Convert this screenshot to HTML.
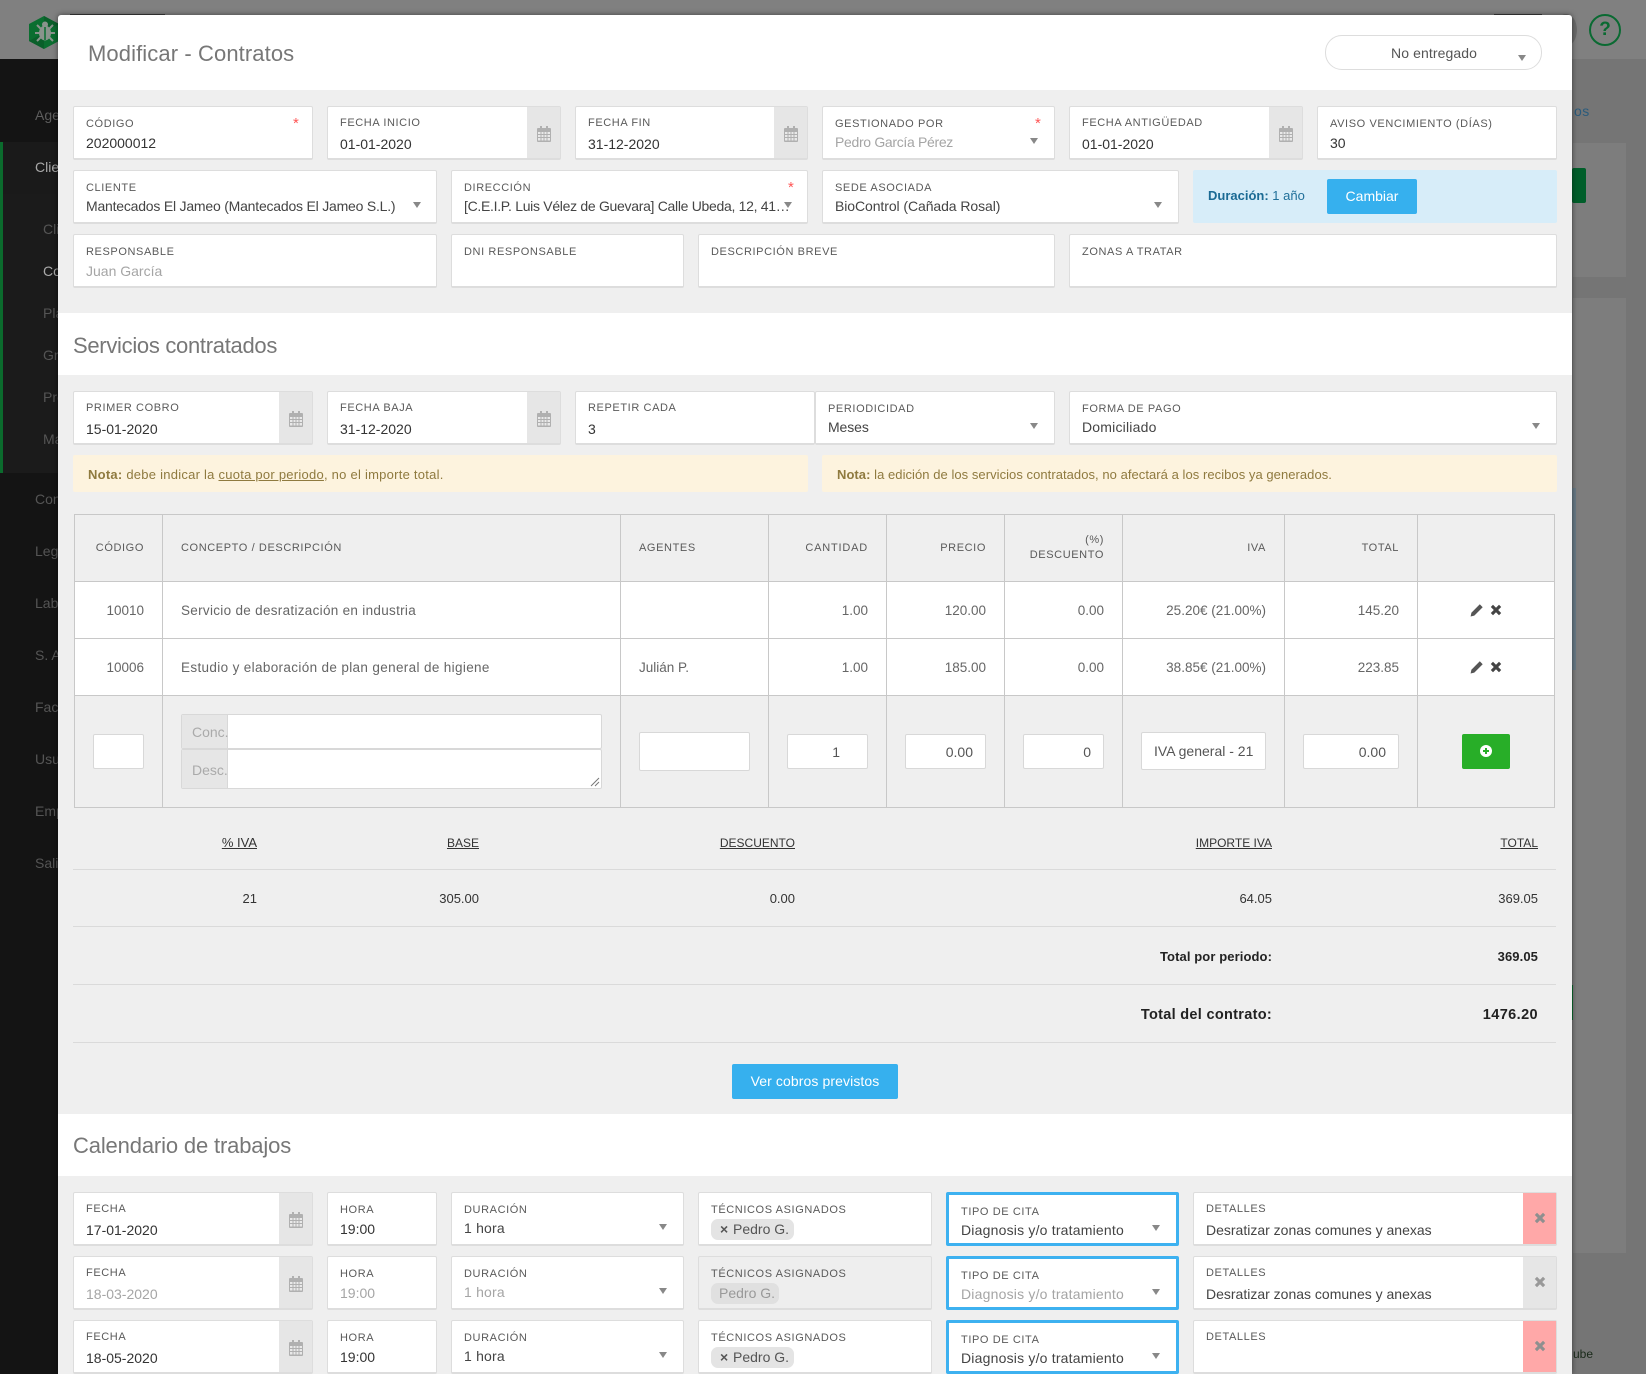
<!DOCTYPE html>
<html lang="es"><head><meta charset="utf-8"><title>Modificar - Contratos</title>
<style>
html,body{margin:0;padding:0}
body{width:1646px;height:1374px;overflow:hidden;position:relative;background:#757575;font-family:"Liberation Sans",sans-serif;color:#555}
.p{position:absolute}
.t{position:absolute;white-space:nowrap;line-height:20px}
.s{position:absolute;white-space:nowrap;line-height:20px;color:#6d6d6d;font-size:14px;left:35px}
.s2{left:43px}
.g{position:absolute;background:#efefef;left:58px;width:1514px}
.f{position:absolute;box-sizing:border-box;background:#fff;border:1px solid #ddd;border-bottom:2px solid #ddd;border-radius:2px}
.l{position:absolute;left:12px;top:9px;line-height:16px;font-size:11px;letter-spacing:.6px;color:#5a5a5a;white-space:nowrap}
.l2{top:8px}
.v,.vs,.vi{position:absolute;left:12px;line-height:20px;font-size:14px;color:#333;white-space:nowrap}
.v{top:27px}.vs{top:25px;letter-spacing:.2px;color:#444}.vi{top:26px}
.gr{color:#a5a5a5!important}
.ad{position:absolute;right:0;top:0;bottom:0;width:33px;background:#e6e6e6}
.ad svg{position:absolute;left:10px;top:19px}
.a{position:absolute;width:0;height:0;border-left:4px solid transparent;border-right:4px solid transparent;border-top:6px solid #888}
.st{position:absolute;font-size:15px;color:#f55;line-height:16px}
.h{position:absolute;left:73px;font-size:22px;line-height:30px;color:#777;white-space:nowrap}
.n{position:absolute;top:455px;height:37px;background:#fdf3de;border-radius:2px;line-height:39px;font-size:13px;color:#8f7a3f;white-space:nowrap;box-sizing:border-box}
table.m{position:absolute;left:74px;top:514px;width:1480px;border-collapse:collapse;table-layout:fixed;font-size:13.5px;color:#666}
table.m td,table.m th{border:1px solid #c8c8c8;padding:0 18px;font-weight:400;white-space:nowrap}
table.m th{background:#efefef;height:66px;font-size:11px;letter-spacing:.6px;color:#5a5a5a;line-height:15px}
table.m tr.r td{background:#fff;height:56px}
table.m tr.e td{background:#efefef;height:111px}
.tl{text-align:left}.tr{text-align:right}
table.m td.w{letter-spacing:.3px}
.i{position:absolute;box-sizing:border-box;background:#fff;border:1px solid #d8d8d8;border-radius:2px;font-size:14px;color:#555;line-height:34px;text-align:right;white-space:nowrap}
.ic{position:absolute}
.sh{position:absolute;white-space:nowrap;font-size:13px;line-height:20px;text-align:right;color:#333}
.sh u.c{font-size:12px}
.ln{position:absolute;left:73px;width:1483px;height:1px;background:#dadada}
.btn{position:absolute;background:#36b0ee;border-radius:2px;color:#fff;font-size:14px;text-align:center;font-weight:400}
.chip{position:absolute;left:12px;top:26px;height:21px;border-radius:7px;background:#e4e4e4;line-height:21px;font-size:14px;color:#555;white-space:nowrap}
.b{position:absolute;box-sizing:border-box;background:#fff;border:3px solid #3db1f0;border-radius:2px;left:946px;width:233px;height:54px}
.b .l{left:12px;top:9px}
.b .vs{left:12px;top:25px}
.b .a{left:203px;top:30px}
.x{position:absolute;right:0;top:0;bottom:0;width:33px;background:#e6e6e6}
.x.pk{background:#ffa8a8}
.x svg{position:absolute;left:11px;top:19px}
</style></head><body>
<svg width="0" height="0" style="position:absolute"><defs>
<symbol id="cal" viewBox="0 0 14 16"><path fill="#b0b0b0" d="M3 0h2v2h4V0h2v2h2a1 1 0 0 1 1 1v12a1 1 0 0 1-1 1H1a1 1 0 0 1-1-1V3a1 1 0 0 1 1-1h2z"/><path fill="#e9e9e9" d="M1 6h2.500v2H1zM4.500 6H6.500v2h-2zM7.500 6h2v2h-2zM10.500 6H13v2h-2.500zM1 9h2.500v2H1zM4.500 9h2v2h-2zM7.500 9h2v2h-2zM10.500 9H13v2h-2.500zM1 12h2.500v2.500H1zM4.500 12h2v2.500h-2zM7.500 12h2v2.500h-2zM10.500 12H13v2.500h-2.500z"/></symbol>
<symbol id="xx" viewBox="0 0 12 12"><path d="M3 .8 6 3.800 9 .8 11.200 3 8.200 6 11.200 9 9 11.200 6 8.200 3 11.200 .8 9 3.800 6 .8 3z"/></symbol>
<symbol id="pen" viewBox="0 0 13 13"><path fill="#555" d="M9.800.3 12.700 3.200 4.300 11.600 .6 12.500 1.400 8.700z"/></symbol>
</defs></svg>

<!-- backdrop -->
<div class="p" style="left:0;top:0;width:1646px;height:59px;background:#808080"></div>
<div class="p" style="left:70px;top:14px;width:95px;height:1px;background:#3a3a3a"></div>
<div class="p" style="left:1494px;top:14px;width:48px;height:1px;background:#3a3a3a"></div>
<div class="p" style="left:0;top:59px;width:58px;height:1315px;background:#141414"></div>
<div class="p" style="left:0;top:142px;width:58px;height:52px;background:#1a1a1a"></div>
<div class="p" style="left:0;top:194px;width:58px;height:279px;background:#1b1b1b"></div>
<div class="p" style="left:0;top:142px;width:3px;height:331px;background:#0b6b2d"></div>
<svg class="p" style="left:28px;top:15px" width="32" height="35" viewBox="0 0 32 35"><polygon points="16,1 31,9 31,26 16,34 1,26 1,9" fill="#0b6e30"/><polygon points="16,1 31,9 16,17.500" fill="#0a5f2a"/><polygon points="1,26 16,17.500 16,34" fill="#0a5f2a"/><ellipse cx="17" cy="18" rx="6" ry="7.500" fill="#8a948c"/><circle cx="17" cy="9.500" r="3" fill="#8a948c"/><path d="M9 10l4 4M25 10l-4 4M7 18h5M27 18h-5M9 26l4-4M25 26l-4-4" stroke="#8a948c" stroke-width="2" fill="none"/><path d="M17 12v13" stroke="#0b6e30" stroke-width="1.500"/></svg>
<div class="s" style="top:105px;color:#5e5e5e">Agenda</div>
<div class="s" style="top:157px;color:#a8a8a8">Clientes</div>
<div class="s s2" style="top:219px;color:#555">Clientes</div>
<div class="s s2" style="top:261px;color:#aaa">Contratos</div>
<div class="s s2" style="top:303px;color:#555">Planes</div>
<div class="s s2" style="top:345px;color:#555">Grupos</div>
<div class="s s2" style="top:387px;color:#555">Precios</div>
<div class="s s2" style="top:429px;color:#555">Mapa</div>
<div class="s" style="top:489px;color:#555">Contratos</div>
<div class="s" style="top:541px;color:#555">Legal</div>
<div class="s" style="top:593px;color:#555">Lab</div>
<div class="s" style="top:645px;color:#555">S. A</div>
<div class="s" style="top:697px;color:#555">Facturas</div>
<div class="s" style="top:749px;color:#555">Usuarios</div>
<div class="s" style="top:801px;color:#555">Empresa</div>
<div class="s" style="top:853px;color:#555">Salir</div>

<div class="p" style="left:1573px;top:143px;width:53px;height:134px;background:#7d7d7d"></div>
<div class="p" style="left:1573px;top:298px;width:53px;height:955px;background:#7d7d7d"></div>
<div class="p" style="left:1572px;top:168px;width:14px;height:35px;background:#005e2a;border-radius:2px"></div>
<div class="p" style="left:1572px;top:488px;width:4px;height:182px;background:#687a86"></div>
<div class="p" style="left:1572px;top:985px;width:1px;height:35px;background:#0b6b2d"></div>
<div class="t" style="left:1574px;top:101px;font-size:14px;letter-spacing:.5px;color:#2a5b7c">os</div>
<div class="t" style="left:1573px;top:1344px;font-size:12px;color:#1a2a1a">ube</div>
<div class="p" style="left:1555px;top:14px;width:22px;height:32px;background:#6a6a6a;border-radius:50%"></div>
<div class="p" style="left:1589px;top:14px;width:32px;height:32px;box-sizing:border-box;border:2.500px solid #0a6a32;border-radius:50%;text-align:center;font-size:19px;font-weight:700;line-height:27px;color:#0a6a32">?</div>

<!-- modal -->
<div class="p" style="left:58px;top:15px;width:1514px;height:1359px;background:#fff;border-radius:3px 3px 0 0;box-shadow:0 0 6px rgba(0,0,0,.5)"></div>
<div class="g" style="top:90px;height:223px"></div>
<div class="g" style="top:375px;height:739px"></div>
<div class="g" style="top:1176px;height:198px"></div>

<div class="t" style="left:88px;top:39px;font-size:22px;line-height:30px;color:#777;letter-spacing:.1px">Modificar - Contratos</div>
<div class="p" style="left:1325px;top:35px;width:217px;height:35px;box-sizing:border-box;border:1px solid #ddd;border-radius:17px;background:#fff"></div>
<div class="t" style="left:1391px;top:43px;font-size:14px;color:#555;letter-spacing:.1px">No entregado</div>
<div class="a" style="left:1518px;top:55px"></div>

<!-- row 1 -->
<div class="f" style="left:73px;top:106px;width:240px;height:54px"><div class="l">CÓDIGO</div><div class="vi">202000012</div><div class="st" style="left:219px;top:9px">*</div></div>
<div class="f" style="left:327px;top:106px;width:234px;height:54px"><div class="l l2">FECHA INICIO</div><div class="v">01-01-2020</div><div class="ad"><svg width="14" height="16"><use href="#cal"/></svg></div></div>
<div class="f" style="left:575px;top:106px;width:233px;height:54px"><div class="l l2">FECHA FIN</div><div class="v">31-12-2020</div><div class="ad"><svg width="14" height="16"><use href="#cal"/></svg></div></div>
<div class="f" style="left:822px;top:106px;width:233px;height:54px"><div class="l">GESTIONADO POR</div><div class="vs gr" style="letter-spacing:-.32px">Pedro García Pérez</div><div class="st" style="left:212px;top:9px">*</div><div class="a" style="left:207px;top:31px"></div></div>
<div class="f" style="left:1069px;top:106px;width:234px;height:54px"><div class="l l2">FECHA ANTIGÜEDAD</div><div class="v">01-01-2020</div><div class="ad"><svg width="14" height="16"><use href="#cal"/></svg></div></div>
<div class="f" style="left:1317px;top:106px;width:240px;height:54px"><div class="l">AVISO VENCIMIENTO (DÍAS)</div><div class="vi">30</div></div>

<!-- row 2 -->
<div class="f" style="left:73px;top:170px;width:364px;height:54px"><div class="l">CLIENTE</div><div class="vs" style="letter-spacing:-.21px">Mantecados El Jameo (Mantecados El Jameo S.L.)</div><div class="a" style="left:339px;top:31px"></div></div>
<div class="f" style="left:451px;top:170px;width:357px;height:54px"><div class="l">DIRECCIÓN</div><div class="vs" style="width:333px;overflow:hidden;text-overflow:ellipsis;letter-spacing:-.3px">[C.E.I.P. Luis Vélez de Guevara] Calle Ubeda, 12, 41500 Alcalá</div><div class="st" style="left:336px;top:9px">*</div><div class="a" style="left:332px;top:31px"></div></div>
<div class="f" style="left:822px;top:170px;width:357px;height:54px"><div class="l">SEDE ASOCIADA</div><div class="vs" style="letter-spacing:-.08px">BioControl (Cañada Rosal)</div><div class="a" style="left:331px;top:31px"></div></div>
<div class="p" style="left:1193px;top:170px;width:364px;height:53px;background:#d7edf9;border-radius:2px"></div>
<div class="t" style="left:1208px;top:186px;font-size:13px;color:#555"><b style="color:#1a6a94">Duración:</b> <span style="color:#1f6f99">1 año</span></div>
<div class="btn" style="left:1327px;top:179px;width:90px;height:35px;line-height:35px">Cambiar</div>

<!-- row 3 -->
<div class="f" style="left:73px;top:234px;width:364px;height:54px"><div class="l">RESPONSABLE</div><div class="vi gr">Juan García</div></div>
<div class="f" style="left:451px;top:234px;width:233px;height:54px"><div class="l">DNI RESPONSABLE</div></div>
<div class="f" style="left:698px;top:234px;width:357px;height:54px"><div class="l">DESCRIPCIÓN BREVE</div></div>
<div class="f" style="left:1069px;top:234px;width:488px;height:54px"><div class="l">ZONAS A TRATAR</div></div>

<div class="h" style="top:331px;letter-spacing:-.3px">Servicios contratados</div>

<!-- services -->
<div class="f" style="left:73px;top:391px;width:240px;height:54px"><div class="l l2">PRIMER COBRO</div><div class="v">15-01-2020</div><div class="ad"><svg width="14" height="16"><use href="#cal"/></svg></div></div>
<div class="f" style="left:327px;top:391px;width:234px;height:54px"><div class="l l2">FECHA BAJA</div><div class="v">31-12-2020</div><div class="ad"><svg width="14" height="16"><use href="#cal"/></svg></div></div>
<div class="f" style="left:575px;top:391px;width:240px;height:54px"><div class="l l2">REPETIR CADA</div><div class="v">3</div></div>
<div class="f" style="left:815px;top:391px;width:240px;height:54px"><div class="l">PERIODICIDAD</div><div class="vs" style="letter-spacing:-.1px">Meses</div><div class="a" style="left:214px;top:31px"></div></div>
<div class="f" style="left:1069px;top:391px;width:488px;height:54px"><div class="l">FORMA DE PAGO</div><div class="vs">Domiciliado</div><div class="a" style="left:462px;top:31px"></div></div>

<div class="n" style="left:73px;width:735px;padding-left:15px;letter-spacing:.25px"><b>Nota:</b> debe indicar la <u>cuota por periodo</u>, no el importe total.</div>
<div class="n" style="left:822px;width:735px;padding-left:15px;letter-spacing:.05px"><b>Nota:</b> la edición de los servicios contratados, no afectará a los recibos ya generados.</div>

<!-- table -->
<table class="m">
<colgroup><col style="width:88px"><col style="width:458px"><col style="width:148px"><col style="width:118px"><col style="width:118px"><col style="width:118px"><col style="width:162px"><col style="width:133px"><col style="width:137px"></colgroup>
<tr><th class="tr">CÓDIGO</th><th class="tl">CONCEPTO / DESCRIPCIÓN</th><th class="tl">AGENTES</th><th class="tr" style="letter-spacing:.8px">CANTIDAD</th><th class="tr">PRECIO</th><th class="tr">(%)<br>DESCUENTO</th><th class="tr">IVA</th><th class="tr">TOTAL</th><th></th></tr>
<tr class="r"><td class="tr">10010</td><td class="w">Servicio de desratización en industria</td><td></td><td class="tr">1.00</td><td class="tr">120.00</td><td class="tr">0.00</td><td class="tr">25.20€ (21.00%)</td><td class="tr">145.20</td><td></td></tr>
<tr class="r"><td class="tr">10006</td><td class="w" style="letter-spacing:.35px">Estudio y elaboración de plan general de higiene</td><td>Julián P.</td><td class="tr">1.00</td><td class="tr">185.00</td><td class="tr">0.00</td><td class="tr">38.85€ (21.00%)</td><td class="tr">223.85</td><td></td></tr>
<tr class="e"><td></td><td></td><td></td><td></td><td></td><td></td><td></td><td></td><td></td></tr>
</table>

<svg class="ic" style="left:1470px;top:604px" width="13" height="13"><use href="#pen"/></svg>
<svg class="ic" style="left:1490px;top:604px;fill:#444" width="12" height="12"><use href="#xx"/></svg>
<svg class="ic" style="left:1470px;top:661px" width="13" height="13"><use href="#pen"/></svg>
<svg class="ic" style="left:1490px;top:661px;fill:#444" width="12" height="12"><use href="#xx"/></svg>

<div class="i" style="left:93px;top:734px;width:51px;height:35px"></div>
<div class="i" style="left:181px;top:714px;width:421px;height:35px;overflow:hidden"><div class="p" style="left:0;top:0;bottom:0;width:46px;background:#e6e6e6;border-right:1px solid #d8d8d8;color:#aaa;text-align:left;padding-left:10px;box-sizing:border-box;line-height:35px">Conc.</div></div>
<div class="i" style="left:181px;top:749px;width:421px;height:40px;overflow:hidden"><div class="p" style="left:0;top:0;bottom:0;width:46px;background:#e6e6e6;border-right:1px solid #d8d8d8;color:#aaa;text-align:left;padding-left:10px;box-sizing:border-box;line-height:40px">Desc.</div><svg class="p" style="right:1px;bottom:1px" width="10" height="10"><path d="M1 9 9 1M5 9 9 5" stroke="#777" fill="none"/></svg></div>
<div class="i" style="left:639px;top:732px;width:111px;height:39px"></div>
<div class="i" style="left:787px;top:734px;width:81px;height:35px;padding-right:27px">1</div>
<div class="i" style="left:905px;top:734px;width:81px;height:35px;padding-right:12px">0.00</div>
<div class="i" style="left:1023px;top:734px;width:81px;height:35px;padding-right:12px">0</div>
<div class="i" style="left:1141px;top:732px;width:125px;height:38px;text-align:left;padding-left:12px;line-height:36px">IVA general - 21</div>
<div class="i" style="left:1303px;top:734px;width:96px;height:35px;padding-right:12px">0.00</div>
<div class="p" style="left:1462px;top:734px;width:48px;height:35px;background:#28ae28;border-radius:2px"></div>
<svg class="p" style="left:1480px;top:745px" width="12" height="12" viewBox="0 0 12 12"><circle cx="6" cy="6" r="6" fill="#fff"/><path d="M6 3v6M3 6h6" stroke="#28ae28" stroke-width="2"/></svg>

<!-- summary -->
<div class="sh" style="right:1389px;top:833px"><u>% IVA</u></div>
<div class="sh" style="right:1167px;top:833px"><u class="c">BASE</u></div>
<div class="sh" style="right:851px;top:833px"><u class="c">DESCUENTO</u></div>
<div class="sh" style="right:374px;top:833px"><u class="c">IMPORTE IVA</u></div>
<div class="sh" style="right:108px;top:833px"><u class="c">TOTAL</u></div>
<div class="ln" style="top:869px"></div>
<div class="sh" style="right:1389px;top:889px">21</div>
<div class="sh" style="right:1167px;top:889px">305.00</div>
<div class="sh" style="right:851px;top:889px">0.00</div>
<div class="sh" style="right:374px;top:889px">64.05</div>
<div class="sh" style="right:108px;top:889px">369.05</div>
<div class="ln" style="top:926px"></div>
<div class="sh" style="right:374px;top:947px;font-weight:700;color:#222;letter-spacing:.1px">Total por periodo:</div>
<div class="sh" style="right:108px;top:947px;font-weight:700;color:#222;letter-spacing:.1px">369.05</div>
<div class="ln" style="top:984px"></div>
<div class="sh" style="right:374px;top:1005px;font-weight:700;font-size:14.500px;color:#222;letter-spacing:.3px">Total del contrato:</div>
<div class="sh" style="right:108px;top:1005px;font-weight:700;font-size:14.500px;color:#222;letter-spacing:.4px">1476.20</div>
<div class="ln" style="top:1042px"></div>
<div class="btn" style="left:732px;top:1064px;width:166px;height:35px;line-height:35px;letter-spacing:.1px">Ver cobros previstos</div>

<div class="h" style="top:1131px;letter-spacing:-.15px">Calendario de trabajos</div>

<!-- cal row 1 -->
<div class="f" style="left:73px;top:1192px;width:240px;height:54px"><div class="l l2">FECHA</div><div class="v">17-01-2020</div><div class="ad"><svg width="14" height="16"><use href="#cal"/></svg></div></div>
<div class="f" style="left:327px;top:1192px;width:110px;height:54px"><div class="l">HORA</div><div class="vi">19:00</div></div>
<div class="f" style="left:451px;top:1192px;width:233px;height:54px"><div class="l">DURACIÓN</div><div class="vs">1 hora</div><div class="a" style="left:207px;top:31px"></div></div>
<div class="f" style="left:698px;top:1192px;width:234px;height:54px"><div class="l">TÉCNICOS ASIGNADOS</div><div class="chip" style="width:83px"><span style="position:absolute;left:9px;font-size:14px;font-weight:700">×</span><span style="position:absolute;left:22px">Pedro G.</span></div></div>
<div class="b" style="top:1192px"><div class="l">TIPO DE CITA</div><div class="vs">Diagnosis y/o tratamiento</div><div class="a"></div></div>
<div class="f" style="left:1193px;top:1192px;width:364px;height:54px"><div class="l l2">DETALLES</div><div class="v" style="color:#444">Desratizar zonas comunes y anexas</div><div class="x pk"><svg width="12" height="12" style="fill:#8f8f8f"><use href="#xx"/></svg></div></div>

<!-- cal row 2 -->
<div class="f" style="left:73px;top:1256px;width:240px;height:54px"><div class="l l2">FECHA</div><div class="v gr">18-03-2020</div><div class="ad"><svg width="14" height="16"><use href="#cal"/></svg></div></div>
<div class="f" style="left:327px;top:1256px;width:110px;height:54px"><div class="l">HORA</div><div class="vi gr">19:00</div></div>
<div class="f" style="left:451px;top:1256px;width:233px;height:54px"><div class="l">DURACIÓN</div><div class="vs gr">1 hora</div><div class="a" style="left:207px;top:31px"></div></div>
<div class="f" style="left:698px;top:1256px;width:234px;height:54px;background:#eee"><div class="l">TÉCNICOS ASIGNADOS</div><div class="chip" style="width:68px;background:#e0e0e0;color:#999"><span style="position:absolute;left:8px">Pedro G.</span></div></div>
<div class="b" style="top:1256px"><div class="l">TIPO DE CITA</div><div class="vs gr">Diagnosis y/o tratamiento</div><div class="a"></div></div>
<div class="f" style="left:1193px;top:1256px;width:364px;height:54px"><div class="l l2">DETALLES</div><div class="v" style="color:#444">Desratizar zonas comunes y anexas</div><div class="x"><svg width="12" height="12" style="fill:#999"><use href="#xx"/></svg></div></div>

<!-- cal row 3 -->
<div class="f" style="left:73px;top:1320px;width:240px;height:54px"><div class="l l2">FECHA</div><div class="v">18-05-2020</div><div class="ad"><svg width="14" height="16"><use href="#cal"/></svg></div></div>
<div class="f" style="left:327px;top:1320px;width:110px;height:54px"><div class="l">HORA</div><div class="vi">19:00</div></div>
<div class="f" style="left:451px;top:1320px;width:233px;height:54px"><div class="l">DURACIÓN</div><div class="vs">1 hora</div><div class="a" style="left:207px;top:31px"></div></div>
<div class="f" style="left:698px;top:1320px;width:234px;height:54px"><div class="l">TÉCNICOS ASIGNADOS</div><div class="chip" style="width:83px"><span style="position:absolute;left:9px;font-size:14px;font-weight:700">×</span><span style="position:absolute;left:22px">Pedro G.</span></div></div>
<div class="b" style="top:1320px"><div class="l">TIPO DE CITA</div><div class="vs">Diagnosis y/o tratamiento</div><div class="a"></div></div>
<div class="f" style="left:1193px;top:1320px;width:364px;height:54px"><div class="l l2">DETALLES</div><div class="x pk"><svg width="12" height="12" style="fill:#8f8f8f"><use href="#xx"/></svg></div></div>
</body></html>
